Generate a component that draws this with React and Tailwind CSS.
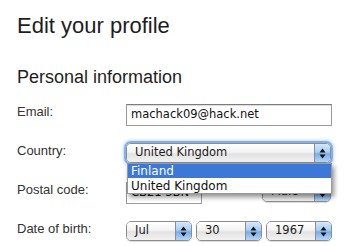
import React from "react";

const ui = { fontFamily: '"DejaVu Sans", "Liberation Sans", sans-serif' };

function Arrows() {
  return (
    <svg width="7" height="11" viewBox="0 0 7 11" className="block">
      <path d="M3.5 0.5 L6.5 4.5 L0.5 4.5 Z" fill="#111" />
      <path d="M3.5 10.5 L6.5 6.5 L0.5 6.5 Z" fill="#111" />
    </svg>
  );
}

function AquaSelect({ value, className = "", focused = false }) {
  return (
    <div
      className={`relative flex h-[20px] overflow-hidden rounded-[5px] border border-[#8e8e8e] ${
        focused ? "shadow-[0_0_0_2px_rgba(110,160,225,0.75),0_0_3px_3px_rgba(120,170,230,0.45)] border-[#6a8fc4]" : "shadow-[0_1px_1px_rgba(0,0,0,0.15)]"
      } ${className}`}
      style={ui}
    >
      <div className="flex flex-1 items-center bg-[linear-gradient(#ffffff,#f3f3f3_45%,#e2e2e2_55%,#f2f2f2)] pl-[8px] text-[11.5px] leading-none text-[#1c1c1c]">
        {value}
      </div>
      <div className="flex w-[16px] items-center justify-center border-l border-[#8e8e8e] bg-[linear-gradient(#d6e8fb,#a9cdf3_45%,#78aee9_55%,#b3d6fa)]">
        <Arrows />
      </div>
    </div>
  );
}

function Label({ children }) {
  return (
    <div className="w-[109px] shrink-0 text-[13px] leading-[16px] text-[#333]">{children}</div>
  );
}

export default function App() {
  return (
    <div
      className="relative h-[246px] w-[349px] overflow-hidden bg-white pl-[17px]"
      style={{ fontFamily: '"Liberation Sans", Arial, sans-serif' }}
    >
      <h1 className="pt-[13px] text-[22px] leading-[26px] text-[#1e1e1e]">Edit your profile</h1>
      <h2 className="mt-[27px] text-[18px] leading-[22px] text-[#1e1e1e]">Personal information</h2>

      <div className="mt-[16px] flex flex-col">
        <div className="flex h-[39px] items-start">
          <Label>Email:</Label>
          <div
            className="flex h-[22px] w-[206px] items-center border border-[#9a9a9a] border-t-[#7c7c7c] bg-white pl-[4px] text-[11.5px] text-[#111] shadow-[inset_0_1px_1px_rgba(0,0,0,0.15)]"
            style={ui}
          >
            machack09@hack.net
          </div>
        </div>

        <div className="flex h-[39px] items-start">
          <Label>Country:</Label>
          <AquaSelect value="United Kingdom" className="w-[205px]" focused />
        </div>

        <div className="flex h-[39px] items-start">
          <Label>Postal code:</Label>
          <div
            className="flex h-[22px] w-[76px] items-center border border-[#9a9a9a] bg-white pl-[4px] text-[11.5px] text-[#111]"
            style={ui}
          >
            CB21 3BN
          </div>
          <div className="ml-[13px] w-[47px] text-[13px] leading-[16px] text-[#333]">Gender:</div>
          <AquaSelect value="Male" className="w-[69px]" />
        </div>

        <div className="flex h-[39px] items-start">
          <Label>Date of birth:</Label>
          <div className="flex gap-[4px]">
            <AquaSelect value="Jul" className="w-[66px]" />
            <AquaSelect value="30" className="w-[66px]" />
            <AquaSelect value="1967" className="w-[66px]" />
          </div>
        </div>
      </div>

      <div
        className="absolute left-[127px] top-[163px] w-[205px] border border-[#9a9a9a] bg-white py-[0px] text-[12px] shadow-[2px_3px_5px_rgba(0,0,0,0.45)]"
        style={ui}
      >
        <div className="flex h-[14px] items-center bg-[#3b78d8] pl-[3px] text-white">Finland</div>
        <div className="flex h-[15px] items-center pl-[3px] text-[#111]">United Kingdom</div>
      </div>
    </div>
  );
}
